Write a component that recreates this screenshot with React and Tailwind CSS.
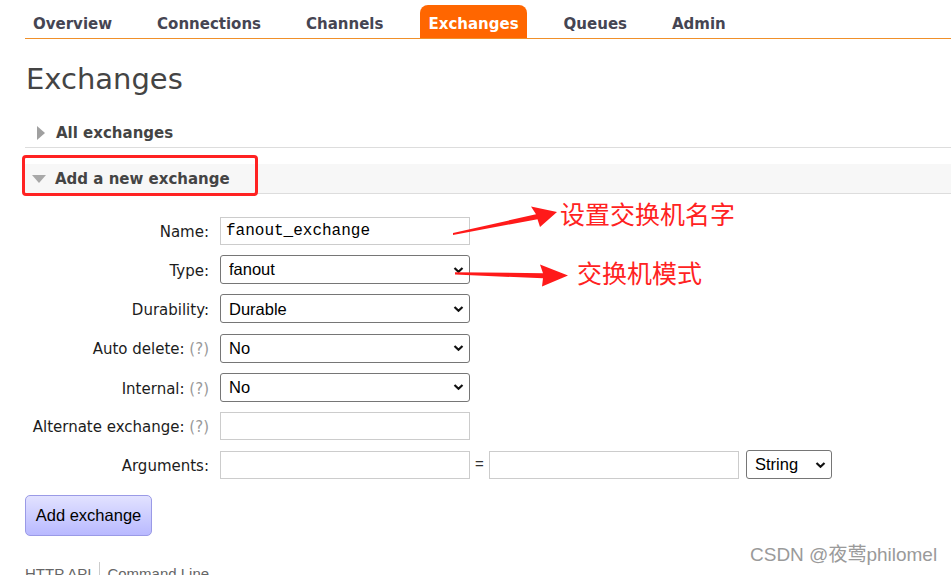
import React from "react";

const tabs = ["Overview", "Connections", "Channels", "Exchanges", "Queues", "Admin"];

function Chevron() {
    return (
        <svg className="pointer-events-none absolute right-[6px] top-1/2 -translate-y-1/2" width="11" height="7" viewBox="0 0 11 7">
            <path d="M1.5 1.5 L5.5 5.3 L9.5 1.5" fill="none" stroke="#111" strokeWidth="2.2" />
        </svg>
    );
}

function Select({ value, className = "w-[250px]" }) {
    return (
        <div className={"relative h-[29px] " + className}>
            <select
                defaultValue={value}
                className="h-full w-full appearance-none rounded-[3px] border border-[#767676] bg-white pl-[8px] font-['Liberation_Sans',Arial,sans-serif] text-[16.5px] leading-none text-black outline-none"
            >
                <option>{value}</option>
            </select>
            <Chevron />
        </div>
    );
}

function TextInput({ value = "", mono = false }) {
    return (
        <input
            defaultValue={value}
            className={
                "h-[28px] w-[250px] border border-[#cccccc] bg-white px-[5px] text-black outline-none " +
                (mono ? "font-['Liberation_Mono',monospace] text-[16px]" : "font-['Liberation_Sans',Arial,sans-serif] text-[16px]")
            }
        />
    );
}

function Row({ label, help, children }) {
    return (
        <div className="flex items-center">
            <div className="w-[184px] shrink-0 pt-[3px] text-right text-[15px] text-[#1c1c1c]">
                {label}
                {help && <span className="text-[#999]"> (?)</span>}
            </div>
            <div className="ml-[11px] flex items-center">{children}</div>
        </div>
    );
}

export default function App() {
    return (
        <div className="relative h-[575px] w-[951px] overflow-hidden bg-white pl-[25px] font-['DejaVu_Sans',Verdana,sans-serif]">
            {/* top navigation */}
            <div className="flex h-[39px] items-end border-b border-[#f0902a] pt-[6px]">
                {tabs.map((t) => (
                    <div
                        key={t}
                        className={
                            "mr-[29px] flex h-[33px] items-center rounded-t-[8px] px-[8px] pt-[5px] text-[15px] font-bold " +
                            (t === "Exchanges" ? "bg-[#ff6600] text-white" : "text-[#454552]")
                        }
                    >
                        {t}
                    </div>
                ))}
            </div>

            <h1 className="mt-[25px] h-[34px] pl-[1px] text-[29px] leading-[30px] text-[#444]">Exchanges</h1>

            {/* sections */}
            <div className="mt-[19px] flex h-[31px] items-center border-b border-[#dddddd] pt-[2px] text-[15px] font-bold text-[#444]">
                <svg className="ml-[12px] mr-[10px]" width="9" height="14" viewBox="0 0 9 14">
                    <path d="M0 0 L8 7 L0 14 Z" fill="#a0a0a0" />
                </svg>
                All exchanges
            </div>
            <div className="mt-[16px] flex h-[30px] items-center border-b border-[#dddddd] bg-[#f7f7f7] pt-[1px] text-[15px] font-bold text-[#444]">
                <svg className="ml-[7px] mr-[9px]" width="14" height="8" viewBox="0 0 14 8">
                    <path d="M0 0 L14 0 L7 8 Z" fill="#a8a8a8" />
                </svg>
                Add a new exchange
            </div>

            {/* form */}
            <div className="mt-[23px] flex flex-col gap-[10.2px]">
                <Row label="Name:">
                    <TextInput value="fanout_exchange" mono />
                </Row>
                <Row label="Type:">
                    <Select value="fanout" />
                </Row>
                <Row label="Durability:">
                    <Select value="Durable" />
                </Row>
                <Row label="Auto delete:" help>
                    <Select value="No" />
                </Row>
                <Row label="Internal:" help>
                    <Select value="No" />
                </Row>
                <Row label="Alternate exchange:" help>
                    <TextInput />
                </Row>
                <Row label="Arguments:">
                    <TextInput />
                    <span className="w-[19px] text-center font-['Liberation_Sans',Arial,sans-serif] text-[15px] text-[#333]">=</span>
                    <TextInput />
                    <Select value="String" className="ml-[7px] w-[86px]" />
                </Row>
            </div>

            <button className="mt-[16px] h-[41px] w-[127px] rounded-[5px] border border-[#9a9ae6] bg-gradient-to-b from-[#e2e2ff] to-[#b9b9ff] font-['Liberation_Sans',Arial,sans-serif] text-[16.5px] text-black">
                Add exchange
            </button>

            {/* footer, cut by the window */}
            <div className="mt-[26px] flex items-start font-['Liberation_Sans',Arial,sans-serif] text-[15px] leading-[18px] text-[#666]">
                <span className="pt-[3px] pr-[8px]">HTTP API</span>
                <span className="h-[22px] border-l border-[#cccccc] pl-[7px] pt-[3px]">Command Line</span>
            </div>

            {/* annotations laid over the screenshot */}
            <div className="pointer-events-none absolute left-[22px] top-[155px] h-[41px] w-[236px] rounded-[4px] border-[3px] border-[#ff2222]" />
            <svg className="pointer-events-none absolute left-0 top-0" width="951" height="575">
                <polygon points="453,233 536,214.3 531,206.5 557,212 540,227 537.5,219.2 453,235" fill="#ff1a1a" />
                <polygon points="455,272.3 543,273.2 540,264.5 568,275.5 542,286.5 543,278.3 455,274.6" fill="#ff1a1a" />
            </svg>
            <div className="pointer-events-none absolute left-[560px] top-[197px] font-['Noto_Sans_CJK_SC',sans-serif] text-[25px] leading-[32px] text-[#ff2222]">
                设置交换机名字
            </div>
            <div className="pointer-events-none absolute left-[577px] top-[256px] font-['Noto_Sans_CJK_SC',sans-serif] text-[25px] leading-[32px] text-[#ff2222]">
                交换机模式
            </div>
            <div className="pointer-events-none absolute left-[750px] top-[543px] font-['Liberation_Sans','Noto_Sans_CJK_SC',sans-serif] text-[19px] leading-[24px] text-[#9a9a9a]">
                CSDN @夜莺philomel
            </div>
        </div>
    );
}
